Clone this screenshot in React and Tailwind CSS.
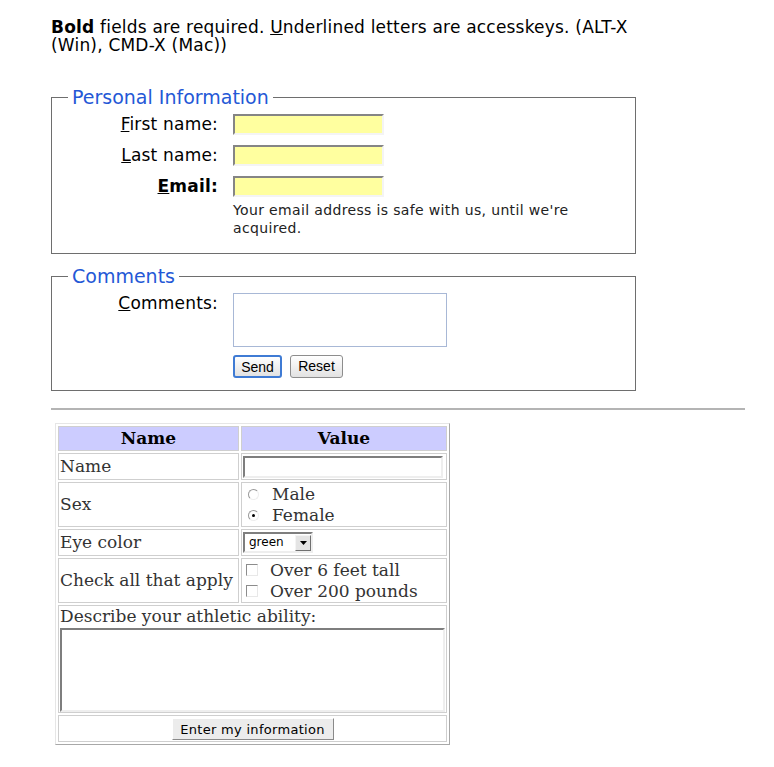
// Form demo page - accesskey fieldsets on top, old-style table form below

function U({ children }) {
  return <span className="underline">{children}</span>
}

function TextBox({ className }) {
  // yellow input with the sunken top/left edge
  return (
    <input
      type="text"
      className={"block h-[21px] border-2 border-t-[#858585] border-l-[#858585] border-r-[#f4f4f4] border-b-[#f4f4f4] bg-[#ffff9f] outline-none " + (className || '')}
    />
  )
}

function Radio({ checked, label }) {
  return (
    <div className="flex items-center h-[21px]">
      <span className="relative ml-[5px] mr-[13px] h-[11px] w-[11px] rounded-full border border-t-[#9a9a9a] border-l-[#9a9a9a] border-r-[#eeeeee] border-b-[#eeeeee] bg-white">
        {checked && <span className="absolute left-[3px] top-[3px] h-[3px] w-[3px] rounded-full bg-black"></span>}
      </span>
      <span>{label}</span>
    </div>
  )
}

function Check({ label }) {
  return (
    <div className="flex items-center h-[21px]">
      <span className="ml-[3px] mr-[12px] h-[12px] w-[12px] border border-t-[#8c8c8c] border-l-[#8c8c8c] border-r-[#e8e8e8] border-b-[#e8e8e8] bg-white"></span>
      <span>{label}</span>
    </div>
  )
}

export default function App() {
  var cell = "border border-[#cfcfcf] px-[1px] py-0 align-middle"

  return (
    <div className="min-h-[767px] bg-white pl-[51px] pr-[29px] pt-[18px] text-black font-['DejaVu_Sans',Verdana,sans-serif]">
      <p className="w-[585px] text-[17px] leading-[18px] tracking-[0.2px]">
        <b>Bold</b> fields are required. <U>U</U>nderlined letters are accesskeys. (ALT-X (Win), CMD-X (Mac))
      </p>

      <fieldset className="mt-[32px] w-[585px] border border-[#6e6e6e] pl-[19px] pr-[10px] pb-[16px]">
        <legend className="ml-[-3px] px-[4px] text-[19px] leading-[22px] text-[#2458d6]">Personal Information</legend>
        <div className="mt-[6px] grid grid-cols-[147px_auto] gap-x-[15px] gap-y-[10px] items-center text-[17px] leading-[21px] tracking-[0.2px]">
          <label className="text-right"><U>F</U>irst name:</label>
          <TextBox className="w-[151px]" />
          <label className="text-right"><U>L</U>ast name:</label>
          <TextBox className="w-[151px]" />
          <label className="text-right font-bold"><U>E</U>mail:</label>
          <TextBox className="w-[151px]" />
          <div></div>
          <p className="-mt-[6px] w-[350px] text-[14px] leading-[18px] tracking-[0.35px] text-[#222]">
            Your email address is safe with us, until we're acquired.
          </p>
        </div>
      </fieldset>

      <fieldset className="mt-[11px] w-[585px] border border-[#6e6e6e] pl-[19px] pr-[10px] pb-[12px]">
        <legend className="ml-[-3px] px-[4px] text-[19px] leading-[22px] text-[#2458d6]">Comments</legend>
        <div className="mt-[6px] grid grid-cols-[147px_auto] gap-x-[15px] text-[17px] leading-[21px] tracking-[0.2px]">
          <label className="text-right"><U>C</U>omments:</label>
          <div>
            <textarea className="block h-[54px] w-[214px] resize-none border border-[#a8b8d6] bg-white outline-none"></textarea>
            <div className="mt-[8px] flex gap-[8px] font-['Liberation_Sans',Arial,sans-serif] text-[14px] tracking-normal">
              <button className="h-[23px] w-[49px] rounded-[3px] border-2 border-[#3f7bd4] bg-gradient-to-b from-[#ffffff] to-[#e2e2e2]">Send</button>
              <button className="h-[23px] w-[53px] rounded-[3px] border border-[#8d8d8d] bg-gradient-to-b from-[#ffffff] to-[#e2e2e2]">Reset</button>
            </div>
          </div>
        </div>
      </fieldset>

      <hr className="mt-[17px] border-0 border-t-2 border-t-[#b4b4b4]" />

      <table className="mt-[13px] ml-[4px] w-[395px] border border-t-[#e6e6e6] border-l-[#e6e6e6] border-r-[#a8a8a8] border-b-[#a8a8a8] border-separate border-spacing-[2px] font-['DejaVu_Serif',serif] text-[17px] leading-[21px] text-[#333]">
        <thead>
          <tr className="h-[25px]">
            <th className={cell + " w-[181px] bg-[#ccccff] text-black"}>Name</th>
            <th className={cell + " bg-[#ccccff] text-black"}>Value</th>
          </tr>
        </thead>
        <tbody>
          <tr className="h-[27px]">
            <td className={cell}>Name</td>
            <td className={cell}>
              <input type="text" className="block h-[22px] w-[200px] border-2 border-t-[#7e7e7e] border-l-[#7e7e7e] border-r-[#eeeeee] border-b-[#eeeeee] bg-white outline-none" />
            </td>
          </tr>
          <tr className="h-[45px]">
            <td className={cell}>Sex</td>
            <td className={cell}>
              <Radio label="Male" />
              <Radio checked label="Female" />
            </td>
          </tr>
          <tr className="h-[27px]">
            <td className={cell}>Eye color</td>
            <td className={cell}>
              <div className="flex h-[21px] w-[70px] items-center border-2 border-t-[#7e7e7e] border-l-[#7e7e7e] border-r-[#eeeeee] border-b-[#eeeeee] font-['DejaVu_Sans',sans-serif] text-[12px] text-black">
                <span className="flex-1 pl-[4px]">green</span>
                <span className="flex h-[16px] w-[16px] items-center justify-center border border-t-[#f4f4f4] border-l-[#f4f4f4] border-r-[#707070] border-b-[#707070] bg-[#e4e4e4]">
                  <svg width="7" height="4" viewBox="0 0 7 4"><path d="M0 0h7L3.5 4z" fill="#000" /></svg>
                </span>
              </div>
            </td>
          </tr>
          <tr className="h-[45px]">
            <td className={cell}>Check all that apply</td>
            <td className={cell}>
              <Check label="Over 6 feet tall" />
              <Check label="Over 200 pounds" />
            </td>
          </tr>
          <tr className="h-[108px]">
            <td colSpan={2} className={cell}>
              <div className="h-[22px]">Describe your athletic ability:</div>
              <textarea className="block h-[84px] w-full resize-none border-2 border-t-[#7e7e7e] border-l-[#7e7e7e] border-r-[#eeeeee] border-b-[#eeeeee] bg-white outline-none"></textarea>
            </td>
          </tr>
          <tr className="h-[27px]">
            <td colSpan={2} className={cell + " text-center"}>
              <button className="h-[22px] w-[162px] border border-t-[#ffffff] border-l-[#ffffff] border-r-[#8a8a8a] border-b-[#8a8a8a] bg-[#ececec] font-['DejaVu_Sans',sans-serif] text-[13px] tracking-[0.3px] text-black">
                Enter my information
              </button>
            </td>
          </tr>
        </tbody>
      </table>
    </div>
  )
}
